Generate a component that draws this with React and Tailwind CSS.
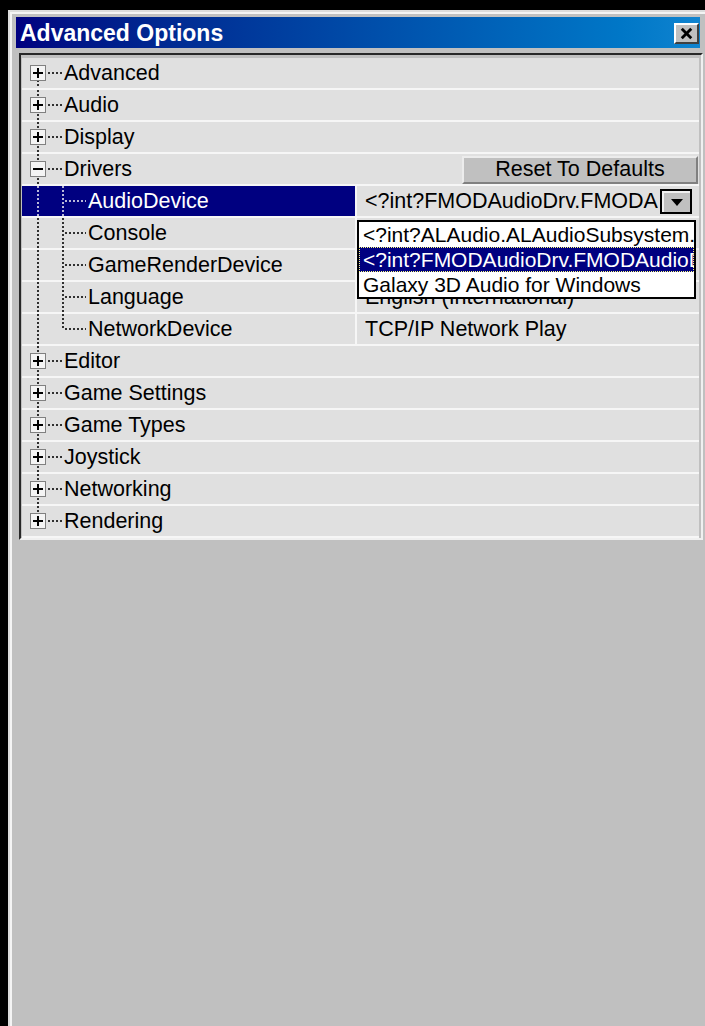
import { X } from "lucide-react";

// Property tree for the "Advanced Options" window.
const groups = [
  { name: "Advanced" },
  { name: "Audio" },
  { name: "Display" },
  {
    name: "Drivers",
    open: true,
    children: [
      { name: "AudioDevice", value: "<?int?FMODAudioDrv.FMODAudioDevice.ClassCaption?>", combo: true },
      { name: "Console", value: "UT2K4Console" },
      { name: "GameRenderDevice", value: "Direct3D Support" },
      { name: "Language", value: "English (International)" },
      { name: "NetworkDevice", value: "TCP/IP Network Play" },
    ],
  },
  { name: "Editor" },
  { name: "Game Settings" },
  { name: "Game Types" },
  { name: "Joystick" },
  { name: "Networking" },
  { name: "Rendering" },
];

const audioDevices = [
  "<?int?ALAudio.ALAudioSubsystem.ClassCaption?>",
  "<?int?FMODAudioDrv.FMODAudioDevice.ClassCaption?>",
  "Galaxy 3D Audio for Windows",
];

const DOTS = "2 2";

function GroupLines({ first, last, open }) {
  const c = "#303030";
  return (
    <svg width="41" height="30" className="shrink-0">
      <line x1="16" x2="16" y1={first ? 22 : 0} y2={last ? 8 : 30} stroke={c} strokeWidth="2" strokeDasharray={DOTS} />
      <line x1="26" x2="40" y1="15" y2="15" stroke={c} strokeWidth="2" strokeDasharray={DOTS} />
      <rect x="8.5" y="7.5" width="15" height="15" fill="#f4f4f4" stroke="#808080" />
      <rect x="11" y="14" width="10" height="2" fill="#000" />
      {!open && <rect x="15" y="10" width="2" height="10" fill="#000" />}
    </svg>
  );
}

function ChildLines({ last, selected }) {
  const c = selected ? "#b8b8d8" : "#303030";
  return (
    <svg width="65" height="30" className="shrink-0">
      <line x1="16" x2="16" y1="0" y2="30" stroke={c} strokeWidth="2" strokeDasharray={DOTS} />
      <line x1="41" x2="41" y1="0" y2={last ? 16 : 30} stroke={c} strokeWidth="2" strokeDasharray={DOTS} />
      <line x1="43" x2="64" y1="15" y2="15" stroke={c} strokeWidth="2" strokeDasharray={DOTS} />
    </svg>
  );
}

function ComboValue({ value }) {
  return (
    <>
      <span className="min-w-0 flex-1 overflow-hidden whitespace-nowrap">{value}</span>
      <span className="mr-[7px] ml-[2px] flex h-[25px] w-[32px] shrink-0 items-center justify-center border-2 border-black bg-[#c0c0c0]">
        <span className="flex h-full w-full items-center justify-center border-t-2 border-l-2 border-[#f0f0f0]">
          <svg width="12" height="7">
            <path d="M0 0h12L6 7z" fill="#000" />
          </svg>
        </span>
      </span>
      <div className="absolute top-[34px] left-0 z-10 w-[339px] border-2 border-black bg-white text-[21px] text-black">
        {audioDevices.map((item, i) => (
          <div
            key={item}
            className={`h-[25px] overflow-hidden whitespace-nowrap px-[4px] leading-[25px] ${
              i === 1 ? "bg-[#000080] text-white outline-1 -outline-offset-1 outline-dotted outline-[#ffff80]" : ""
            }`}
          >
            {item}
          </div>
        ))}
      </div>
    </>
  );
}

export default function App() {
  return (
    <div className="h-[1026px] w-[705px] overflow-hidden bg-black pt-[10px] pl-[8px] font-['Liberation_Sans',Arial,sans-serif]">
      <div className="h-full w-[720px] border-t-2 border-l-2 border-[#dcdcdc] bg-[#c0c0c0]">
        <div className="h-full border-t-2 border-l-2 border-[#f4f4f4] pt-[3px] pl-[4px]">
          {/* caption */}
          <div className="flex h-[31px] w-[684px] items-center bg-linear-to-r from-[#000080] to-[#1084d0] pt-[1px] pl-[4px]">
            <span className="text-[23px] leading-none font-bold text-white">Advanced Options</span>
            <button
              type="button"
              className="mr-[1px] ml-auto flex h-[21px] w-[25px] items-center justify-center border-t-2 border-l-2 border-white border-r-2 border-b-2 border-r-[#404040] border-b-[#404040] bg-[#c0c0c0]"
            >
              <X className="h-[15px] w-[15px] text-black" strokeWidth={4.5} strokeLinecap="square" />
            </button>
          </div>

          {/* tree */}
          <div className="mt-[5px] ml-[3px] w-[684px] border-t-2 border-l-2 border-[#282828] border-r-2 border-b-2 border-r-[#f0f0f0] border-b-[#f0f0f0] pt-[3px] pr-[2px] pl-[1px]">
            {groups.map((group, gi) => (
              <div key={group.name}>
                <div className="flex h-[32px] border-b-2 border-[#f6f6f6] bg-[#e0e0e0] text-[21.5px] text-black">
                  <div className="flex w-[333px] shrink-0 items-center">
                    <GroupLines first={gi === 0} last={gi === groups.length - 1} open={group.open} />
                    <span className="ml-[1px]">{group.name}</span>
                  </div>
                  {group.open && (
                    <div className="flex min-w-0 flex-1 items-start justify-end pt-[2px] pr-[1px]">
                      <button
                        type="button"
                        className="h-[28px] w-[236px] border-t-2 border-l-2 border-[#ececec] border-r-2 border-b-2 border-r-[#808080] border-b-[#808080] bg-[#c0c0c0] text-[21.5px] leading-none text-black"
                      >
                        Reset To Defaults
                      </button>
                    </div>
                  )}
                </div>

                {group.open &&
                  group.children.map((child, ci) => {
                    const selected = ci === 0;
                    return (
                      <div key={child.name} className="flex h-[32px] border-b-2 border-[#f6f6f6] bg-[#e0e0e0] text-[21.5px] text-black">
                        <div className={`flex w-[333px] shrink-0 items-center ${selected ? "bg-[#000080] text-white" : ""}`}>
                          <ChildLines last={ci === group.children.length - 1} selected={selected} />
                          <span className="ml-[1px]">{child.name}</span>
                        </div>
                        <div className={`flex min-w-0 flex-1 items-center border-l-2 border-[#f6f6f6] pl-[8px] ${child.combo ? "relative" : ""}`}>
                          {child.combo ? <ComboValue value={child.value} /> : <span className="whitespace-nowrap">{child.value}</span>}
                        </div>
                      </div>
                    );
                  })}
              </div>
            ))}
          </div>
        </div>
      </div>
    </div>
  );
}
